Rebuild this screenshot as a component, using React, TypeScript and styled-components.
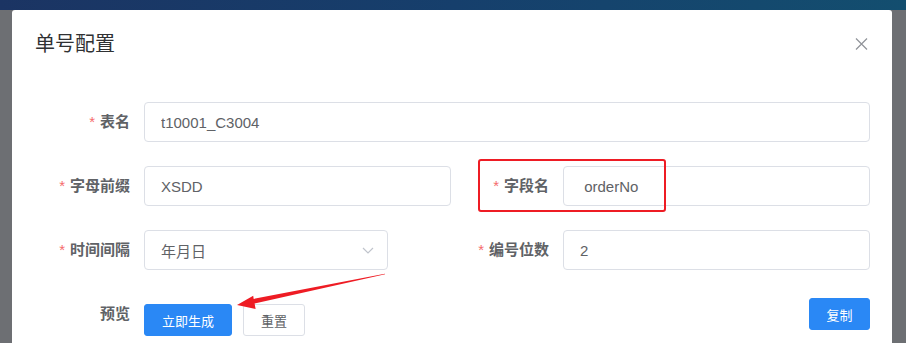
import React from 'react';
import styled, { createGlobalStyle } from 'styled-components';

const GlobalStyle = createGlobalStyle`
  html, body {
    margin: 0;
    padding: 0;
  }
  body {
    background: #6d6f73;
    font-family: "Liberation Sans", "Noto Sans CJK SC", sans-serif;
    overflow: hidden;
  }
`;

const Page = styled.div`
  height: 343px;
  display: flex;
  flex-direction: column;
  background: #6d6f73;
`;

const TopBar = styled.div`
  height: 10px;
  flex-shrink: 0;
  background: linear-gradient(90deg, #1b3463 0%, #163f6c 50%, #134e6f 100%);
`;

const Dialog = styled.div`
  position: relative;
  flex: 1;
  margin: 0 14px 0 12px;
  background: #fff;
  border-radius: 3px 3px 0 0;
`;

const Header = styled.div`
  display: flex;
  justify-content: space-between;
  align-items: center;
  padding: 22px 24px 0 23px;
`;

const Title = styled.span`
  font-size: 20px;
  line-height: 24px;
  color: #303133;
`;

const CloseButton = styled.button`
  display: flex;
  padding: 0;
  border: none;
  background: none;
  cursor: pointer;
`;

const Form = styled.form`
  display: grid;
  grid-template-columns: 1fr 1fr;
  row-gap: 24px;
  padding: 46px 22px 0 20px;
`;

const FormItem = styled.div<{ $full?: boolean }>`
  display: flex;
  align-items: flex-start;
  grid-column: ${(p) => (p.$full ? '1 / -1' : 'auto')};
`;

const Label = styled.label<{ $required?: boolean }>`
  width: 112px;
  flex-shrink: 0;
  box-sizing: border-box;
  padding-right: 14px;
  text-align: right;
  font-size: 15px;
  line-height: 40px;
  font-weight: 700;
  color: #606266;

  &::before {
    content: ${(p) => (p.$required ? '"*"' : 'none')};
    color: #f56c6c;
    font-weight: 400;
    margin-right: 5px;
  }
`;

const Control = styled.div<{ $width?: number }>`
  position: relative;
  flex: ${(p) => (p.$width ? 'none' : '1')};
  width: ${(p) => (p.$width ? `${p.$width}px` : 'auto')};
`;

const Input = styled.input`
  display: block;
  width: 100%;
  height: 40px;
  box-sizing: border-box;
  padding: 0 16px;
  border: 1px solid #dcdfe6;
  border-radius: 4px;
  font-family: inherit;
  font-size: 15px;
  color: #606266;
  background: #fff;
  outline: none;
  white-space: pre;
`;

const SelectBox = styled.div`
  display: flex;
  align-items: center;
  justify-content: space-between;
  height: 40px;
  box-sizing: border-box;
  padding: 0 13px 0 16px;
  border: 1px solid #dcdfe6;
  border-radius: 4px;
  font-size: 15px;
  color: #606266;
`;

const ButtonRow = styled.div`
  flex: 1;
  display: flex;
  align-items: center;
  gap: 11px;
  height: 40px;
`;

const Button = styled.button<{ $primary?: boolean; $offset?: number }>`
  height: 32px;
  box-sizing: border-box;
  padding: 0 17px;
  margin-top: ${(p) => p.$offset ?? 0}px;
  align-self: ${(p) => (p.$offset ? 'flex-start' : 'center')};
  border: 1px solid ${(p) => (p.$primary ? '#2a88f5' : '#dcdfe6')};
  border-radius: 3px;
  background: ${(p) => (p.$primary ? '#2a88f5' : '#fff')};
  color: ${(p) => (p.$primary ? '#fff' : '#606266')};
  font-family: inherit;
  font-size: 13px;
  cursor: pointer;
`;

const CopyButton = styled(Button)`
  && {
    margin-left: auto;
    width: 61px;
    padding: 0;
  }
`;

const Highlight = styled.div`
  position: absolute;
  left: 466px;
  top: 149px;
  width: 188px;
  height: 53px;
  box-sizing: border-box;
  border: 2px solid #ee1c24;
  border-radius: 3px;
  pointer-events: none;
`;

const ArrowLayer = styled.svg`
  position: absolute;
  left: 0;
  top: 0;
  pointer-events: none;
`;

function CloseIcon() {
  return (
    <svg width='13' height='12' viewBox='0 0 13 12'>
      <path d='M1 0.5L12 11.5M12 0.5L1 11.5' stroke='#909399' strokeWidth='1.2' fill='none' />
    </svg>
  );
}

function ChevronDown() {
  return (
    <svg width='12' height='7' viewBox='0 0 12 7'>
      <path d='M1 1L6 6L11 1' stroke='#c0c4cc' strokeWidth='1.2' fill='none' />
    </svg>
  );
}

export default function App() {
  return (
    <Page>
      <GlobalStyle />
      <TopBar />
      <Dialog>
        <Header>
          <Title>单号配置</Title>
          <CloseButton type='button'>
            <CloseIcon />
          </CloseButton>
        </Header>
        <Form>
          <FormItem $full>
            <Label $required>表名</Label>
            <Control>
              <Input defaultValue='t10001_C3004' />
            </Control>
          </FormItem>
          <FormItem>
            <Label $required>字母前缀</Label>
            <Control>
              <Input defaultValue='XSDD' />
            </Control>
          </FormItem>
          <FormItem>
            <Label $required>字段名</Label>
            <Control>
              <Input defaultValue=' orderNo' />
            </Control>
          </FormItem>
          <FormItem>
            <Label $required>时间间隔</Label>
            <Control $width={244}>
              <SelectBox>
                <span>年月日</span>
                <ChevronDown />
              </SelectBox>
            </Control>
          </FormItem>
          <FormItem>
            <Label $required>编号位数</Label>
            <Control>
              <Input defaultValue='2' />
            </Control>
          </FormItem>
          <FormItem $full>
            <Label>预览</Label>
            <ButtonRow>
              <Button type='button' $primary $offset={10}>立即生成</Button>
              <Button type='button' $offset={10}>重置</Button>
              <CopyButton type='button' $primary>复制</CopyButton>
            </ButtonRow>
          </FormItem>
        </Form>
        <Highlight />
        <ArrowLayer width='880' height='333' viewBox='0 0 880 333'>
          <polygon
            fill='#ee1c24'
            points='373.1,264.3 242.6,293.4 243.6,299 225,295 241.2,285.7 241.7,288.9 372.9,263.7'
          />
        </ArrowLayer>
      </Dialog>
    </Page>
  );
}
